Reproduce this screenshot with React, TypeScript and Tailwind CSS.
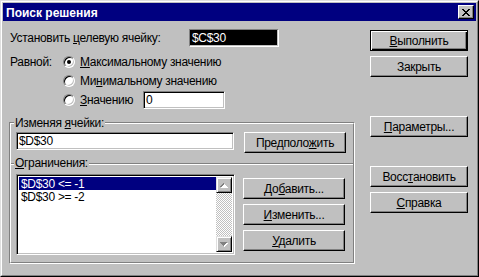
import React from "react";
import clsx from "clsx";

const raised =
  "border border-t-white border-l-white border-r-black border-b-black shadow-[inset_-1px_-1px_0_#808080]";
const sunken =
  "border border-t-[#808080] border-l-[#808080] border-b-white border-r-white shadow-[inset_1px_1px_0_#000,inset_-1px_-1px_0_#c0c0c0]";

const Button = ({
  children,
  isDefault,
  className,
}: {
  children: React.ReactNode;
  isDefault?: boolean;
  className?: string;
}) => (
  <div
    className={clsx(
      "h-[21px] flex items-center justify-center bg-[#c0c0c0] text-black leading-none shrink-0",
      isDefault
        ? "border border-black shadow-[inset_1px_1px_0_#fff,inset_-1px_-1px_0_#000,inset_-2px_-2px_0_#808080]"
        : raised,
      className
    )}
  >
    <span className="pt-[1px]">{children}</span>
  </div>
);

const Radio = ({ checked }: { checked?: boolean }) => (
  <div
    className={clsx(
      "w-[12px] h-[12px] rounded-full bg-white flex items-center justify-center shrink-0",
      "border border-t-[#808080] border-l-[#808080] border-b-white border-r-white shadow-[inset_1px_1px_0_#000,inset_-1px_-1px_0_#c0c0c0]"
    )}
  >
    {checked && <div className="w-[4px] h-[4px] rounded-full bg-black" />}
  </div>
);

const Arrow = ({ down }: { down?: boolean }) => (
  <svg width="8" height="5" viewBox="0 0 8 5" shapeRendering="crispEdges">
    {[0, 1, 2, 3].map((i) => {
      const row = down ? i : 3 - i;
      return (
        <g key={i}>
          <rect x={i + 1} y={row + 1} width={7 - 2 * i} height={1} fill="#fff" />
          <rect x={i} y={row} width={7 - 2 * i} height={1} fill="#808080" />
        </g>
      );
    })}
  </svg>
);

const ScrollButton = ({ down }: { down?: boolean }) => (
  <div
    className={clsx(
      "w-[16px] h-[16px] bg-[#c0c0c0] flex items-center justify-center shrink-0",
      "border border-t-[#dfdfdf] border-l-[#dfdfdf] border-r-black border-b-black shadow-[inset_1px_1px_0_#fff,inset_-1px_-1px_0_#808080]"
    )}
  >
    <Arrow down={down} />
  </div>
);

const CloseGlyph = () => (
  <svg width="8" height="7" viewBox="0 0 8 7" shapeRendering="crispEdges">
    {[0, 1, 2, 3, 4, 5, 6].map((r) => {
      const off = r <= 3 ? r : 6 - r;
      return (
        <g key={r}>
          <rect x={off} y={r} width={2} height={1} fill="#000" />
          <rect x={6 - off} y={r} width={2} height={1} fill="#000" />
        </g>
      );
    })}
  </svg>
);

export default function App() {
  return (
    <div
      className="w-[479px] h-[277px] bg-[#c0c0c0] text-black text-[12px] tracking-[-0.3px] border border-t-[#dfdfdf] border-l-[#dfdfdf] border-r-black border-b-black"
      style={{ fontFamily: '"Liberation Sans", Arial, sans-serif' }}
    >
      <div className="h-full border border-t-white border-l-white border-r-[#808080] border-b-[#808080] p-[1px] flex flex-col">
        {/* Title bar */}
        <div className="h-[18px] bg-[#000080] flex items-center justify-between pl-[3px] pr-[2px] shrink-0">
          <span className="text-white font-bold text-[12px] tracking-[0px] leading-none pt-[1px]">
            Поиск решения
          </span>
          <div
            className={clsx(
              "w-[16px] h-[14px] bg-[#c0c0c0] flex items-center justify-center",
              "border border-t-white border-l-white border-r-black border-b-black shadow-[inset_-1px_-1px_0_#808080]"
            )}
          >
            <CloseGlyph />
          </div>
        </div>

        {/* Body */}
        <div className="flex pl-[6px]">
          {/* Left side */}
          <div className="w-[346px] flex flex-col">
            <div className="mt-[8px] h-[18px] flex items-center">
              <div className="w-[180px] pl-[1px]">
                Установить <u>ц</u>елевую ячейку:
              </div>
              <div className="w-[90px] h-[18px] bg-black text-white flex items-center pl-[2px] border border-t-[#808080] border-l-[#808080] border-b-white border-r-white shadow-[inset_-1px_-1px_0_#c0c0c0]">
                $C$30
              </div>
            </div>

            <div className="mt-[5px] flex">
              <div className="w-[54px] pl-[1px] h-[19px] flex items-center">
                Равной:
              </div>
              <div className="flex flex-col">
                <div className="h-[19px] flex items-center gap-[5px]">
                  <Radio checked />
                  <span>
                    <u>М</u>аксимальному значению
                  </span>
                </div>
                <div className="h-[19px] flex items-center gap-[5px]">
                  <Radio />
                  <span>
                    Ми<u>н</u>имальному значению
                  </span>
                </div>
                <div className="h-[19px] flex items-center gap-[5px]">
                  <Radio />
                  <span className="w-[58px]">
                    <u>З</u>начению
                  </span>
                  <div className={clsx("w-[82px] h-[18px] bg-white flex items-center pl-[2px]", sunken)}>
                    0
                  </div>
                </div>
              </div>
            </div>

            {/* Groups */}
            <div className="mt-[13px] border border-t-[#808080] border-l-[#808080] border-r-white border-b-white">
              <div className="border border-t-white border-l-white border-r-[#808080] border-b-[#808080]">
                <div className="relative h-[39px] pt-[7px] pl-[5px] flex items-start gap-[10px]">
                  <span className="absolute left-[3px] top-[-8px] px-[1px] bg-[#c0c0c0] leading-[14px]">
                    Изменяя <u>я</u>чейки:
                  </span>
                  <div className={clsx("w-[218px] h-[18px] bg-white flex items-center pl-[2px] mt-[1px]", sunken)}>
                    $D$30
                  </div>
                  <Button className="w-[102px] mt-[1px]">
                    Предполо<u>ж</u>ить
                  </Button>
                </div>
                <div className="border-t border-t-[#808080]">
                  <div className="relative border-t border-t-white h-[98px] pt-[9px] pl-[5px] flex items-start gap-[8px]">
                    <span className="absolute left-[3px] top-[-9px] px-[1px] bg-[#c0c0c0] leading-[14px]">
                      <u>О</u>граничения:
                    </span>
                    <div className={clsx("w-[219px] h-[81px] bg-white flex p-[2px]", sunken)}>
                      <div className="flex-1 flex flex-col">
                        <div className="h-[13px] bg-[#000080] text-white flex items-center pl-[2px] leading-none">
                          $D$30 &lt;= -1
                        </div>
                        <div className="h-[13px] flex items-center pl-[2px] leading-none">
                          $D$30 &gt;= -2
                        </div>
                      </div>
                      <div className="w-[16px] flex flex-col justify-between bg-[repeating-conic-gradient(#c0c0c0_0_25%,#fff_0_50%)] bg-[length:2px_2px]">
                        <ScrollButton />
                        <ScrollButton down />
                      </div>
                    </div>
                    <div className="flex flex-col gap-[5px] pt-[4px]">
                      <Button className="w-[102px]">
                        До<u>б</u>авить...
                      </Button>
                      <Button className="w-[102px]">
                        <u>И</u>зменить...
                      </Button>
                      <Button className="w-[102px]">
                        <u>У</u>далить
                      </Button>
                    </div>
                  </div>
                </div>
              </div>
            </div>
          </div>

          {/* Right side buttons */}
          <div className="ml-[15px] w-[98px] flex flex-col">
            <Button isDefault className="mt-[9px]">
              <u>В</u>ыполнить
            </Button>
            <Button className="mt-[5px]">Закрыть</Button>
            <Button className="mt-[39px]">
              <u>П</u>араметры...
            </Button>
            <Button className="mt-[29px]">
              Восс<u>т</u>ановить
            </Button>
            <Button className="mt-[5px]">
              <u>С</u>правка
            </Button>
          </div>
        </div>
      </div>
    </div>
  );
}
